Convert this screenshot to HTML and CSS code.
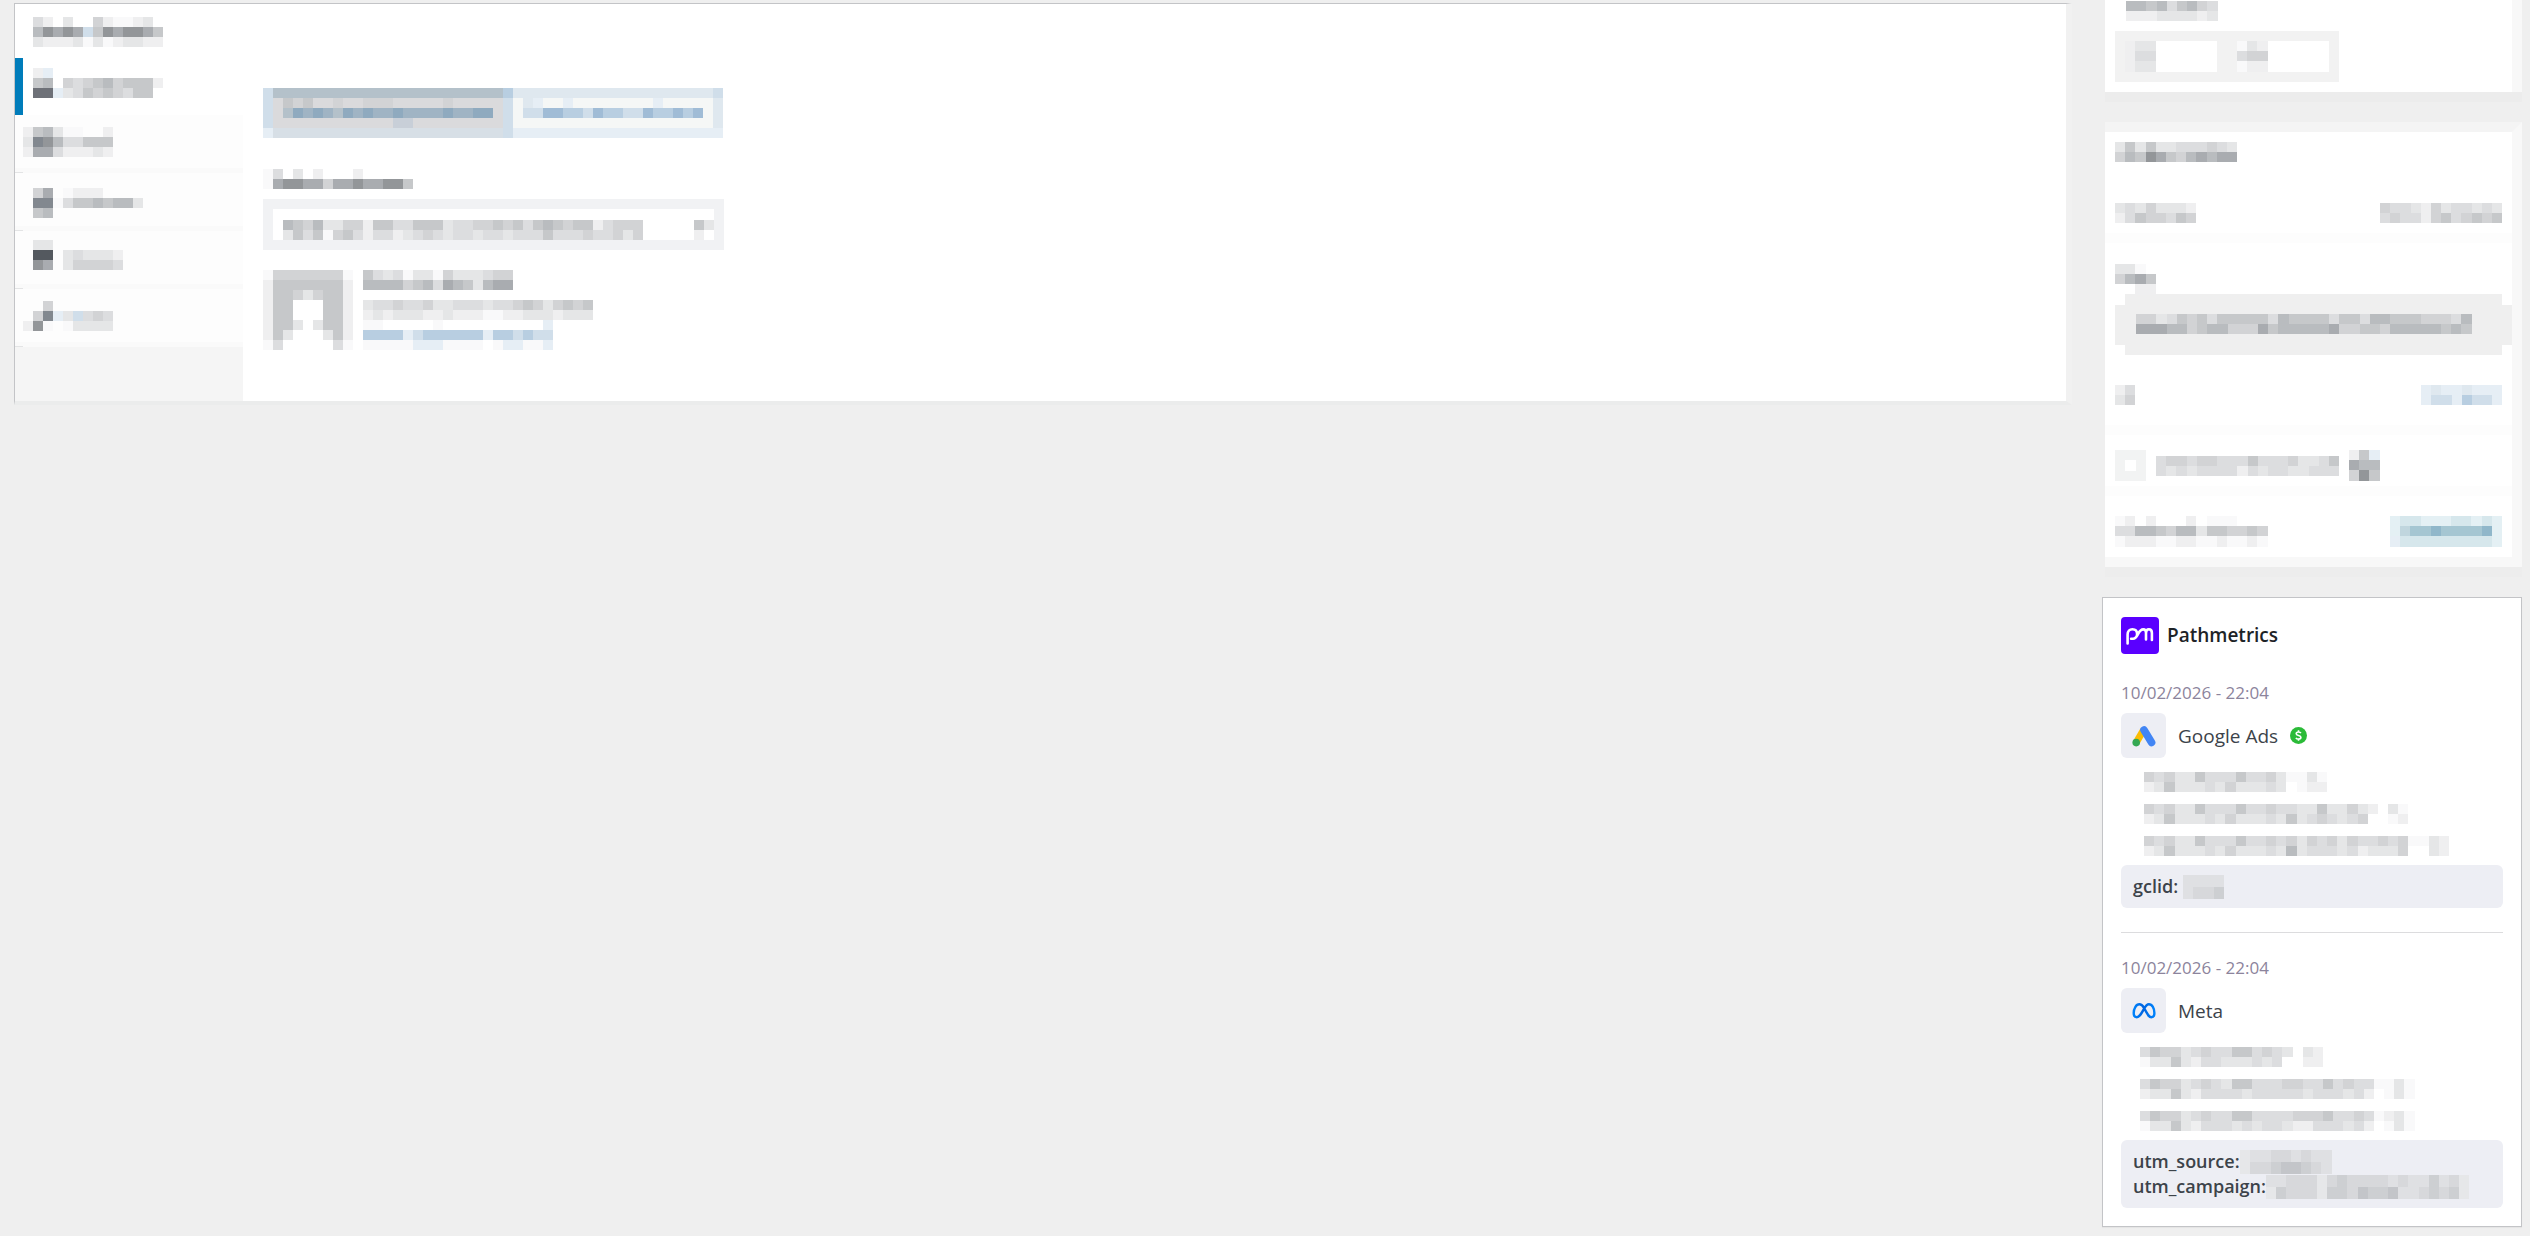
FILE: index.html
```
<!DOCTYPE html>
<html lang="en">
<head>
    <meta charset="utf-8">
    <title>Pathmetrics</title>
    <link rel="stylesheet" href="styles.css">
</head>
<body>
    <main class="order-panel">
        <h1 class="panel-title"><span class="mosaic" data-rows="42.3..521123./79898b6989986/3222313123322"></span></h1>
        <div class="panel-body">
            <nav class="tabs">
                <a href="#" class="tab active"><span class="mosaic" data-rows="2a.........../67.5456756662/jja346565466."></span></a>
                <a href="#" class="tab wide"><span class="mosaic" data-rows="267311..2/3h9744666/288422232"></span></a>
                <a href="#" class="tab"><span class="mosaic" data-rows="58.1222..../hh146676773/67........."></span></a>
                <a href="#" class="tab up"><span class="mosaic" data-rows="33......./kk.343332/98.355554"></span></a>
                <a href="#" class="tab wide"><span class="mosaic" data-rows="..5....../.5ha3b454/291.13333"></span></a>
            </nav>
            <section class="customer">
                <div class="switch">
                    <button type="button"><span class="mosaic" data-rows="btttttttttttttttttttttttc/bu656uu5uu555uuuuu5uuuuub/butefeftefeffeffffeffeeub/buuuuuuuuuuuugguuuuuuuuub/avvvvvvvvvvvvvvvvvvvvvvvb"></span></button>
                    <button type="button"><span class="mosaic" data-rows="yyyyyyyyyyyyyyyyyyyyb/wyawwawwwwwwwwawwwwwy/wbbddccbdccbbdccdcdwy/wwwwwwwwwwwwwwwwwwwwy/aaaaaaaaaaaaaaaaaaaaa"></span></button>
                </div>
                <div class="field-label"><span class="mosaic" data-rows="14.3.2...2...../189988588988996"></span></div>
                <button type="button" class="picker" aria-haspopup="listbox">
                    <span class="mosaic" data-rows="765733552664466634455656467656624555/364615642442345434434434446444544535"></span>
                    <span class="mosaic" data-rows="63/2."></span>
                </button>
                <div class="profile">
                    <span class="mosaic" data-rows="155555551/266666662/266535662/266...662/266...662/2663.3662/263...362/14.....41"></span>
                    <div class="profile-text">
                        <span class="mosaic" data-rows="643413315333455/777756748763788"></span>
                        <span class="mosaic" data-rows="34454453344434456535656/23233322322211223332333"></span>
                        <a href="#"><span class="mosaic" data-rows="11.....1..........a/ccccabccccccaccbcbb/11111aaa1111.1aa11a"></span></a>
                    </div>
                </div>
            </section>
        </div>
    </main>

    <aside class="side">
        <section class="meta-box time-box">
            <span class="mosaic" data-rows="776746754/222333323"></span>
            <div class="time-fields">
                <label class="time-field"><span class="mosaic" data-rows="233/244/233"></span><input type="text" aria-label="Hour"></label>
                <label class="time-field"><span class="mosaic" data-rows="132/455/122"></span><input type="text" aria-label="Minute"></label>
            </div>
        </section>

        <section class="meta-box review-box">
            <h2 class="review-title"><span class="mosaic" data-rows="363633444543/576986578788"></span></h2>
            <div class="review-row status-row">
                <span class="mosaic" data-rows="34353332/24655465"></span>
                <span class="mosaic" data-rows="544325344343/454425645656"></span>
            </div>
            <div class="review-row flow-row">
                <span class="mosaic" data-rows="331./5786/..22"></span>
            </div>
            <div class="flow-value"><span class="mosaic" data-rows="553465646666647666646647766655547/888775677555867777785566577777676"></span></div>
            <div class="review-row id-row">
                <span class="mosaic" data-rows="24/35"></span>
                <a href="#"><span class="mosaic" data-rows="ayaayaaa/abbacbba"></span></a>
            </div>
            <label class="review-row check-row">
                <input type="checkbox" class="check">
                <span class="mosaic" data-rows="455455444644453346/434344442434433444"></span>
                <span class="mosaic" data-rows="26a/877/596"></span>
            </label>
            <div class="review-row device-row">
                <span class="mosaic" data-rows="12.2...2.111.../447765773665565/122211221121121"></span>
                <span class="mosaic" data-rows="pqqpppqqpqp/pnrrsrrrrsp/aqqqqqqqqqp"></span>
            </div>
        </section>

        <section class="pathmetrics">
            <h2 class="brand">
                <svg class="brand-logo" viewBox="0 0 38 37" aria-hidden="true">
                    <rect width="38" height="37" rx="4" fill="#5a00ff"/>
                    <path d="M6.600 26.500V17.500c0-3.200 2-5.300 4.800-5.300 M12 21.800c5.500 0 4.500-9.400 10.300-9.400 1.900 0 2.700 1.400 2.700 3.300v6.700M25 16c0-2.500 1.100-3.800 2.900-3.800 2 0 3 1.500 3 3.800v7M11.400 12.200c2.900 0 4.700 1.900 4.700 4.700 0 2.800-1.800 4.900-4.700 4.900h-1.300" fill="none" stroke="#fff" stroke-width="2.600" stroke-linecap="round" stroke-linejoin="round"/>
                </svg>
                Pathmetrics
            </h2>

            <article class="visit">
                <time class="visit-date">10/02/2026 - 22:04</time>
                <div class="visit-source">
                    <span class="source-icon">
                        <svg width="24" height="24" viewBox="0 0 24 24" aria-hidden="true">
                            <path d="M11.400 6.200L4.200 18.600" stroke="#fbbc04" stroke-width="7"/>
                            <path d="M12 6L19.600 18.500" stroke="#4285f4" stroke-width="7.600" stroke-linecap="round"/>
                            <circle cx="4.200" cy="18.600" r="3.800" fill="#34a853"/>
                        </svg>
                    </span>
                    <span class="source-name">Google Ads</span>
                    <svg class="paid" width="17" height="17" viewBox="0 0 17 17" aria-hidden="true">
                        <circle cx="8.500" cy="8.500" r="8.500" fill="#2bbb38"/>
                        <path d="M10.900 6.200C10.400 5.300 9.500 5 8.500 5 7.200 5 6.200 5.600 6.200 6.700c0 2.400 4.700 1.200 4.700 3.600 0 1.100-1 1.800-2.400 1.800-1.200 0-2.100-.4-2.600-1.300M8.500 3.300V5M8.500 12.100v1.700" fill="none" stroke="#fff" stroke-width="1.600"/>
                    </svg>
                </div>
                <ul class="pages">
                    <li><a href="#"><span class="mosaic" data-rows="545336444644531131/23633343533343.122"></span></a></li>
                    <li><a href="#"><span class="mosaic" data-rows="54533644464454433633532.31/2363334353334363454345..12"></span></a></li>
                    <li><a href="#"><span class="mosaic" data-rows="545336444644545354535445451132/23633343533343734443423335..32"></span></a></li>
                </ul>
                <div class="params">
                    <div class="param">gclid: <span class="mosaic" data-rows="4444/4556"></span></div>
                </div>
            </article>

            <article class="visit meta-visit">
                <time class="visit-date">10/02/2026 - 22:04</time>
                <div class="visit-source">
                    <span class="source-icon">
                        <svg width="24" height="24" viewBox="0 0 24 24" aria-hidden="true">
                            <defs>
                                <linearGradient id="metaBlue">
                                    <stop offset="0" stop-color="#0082fb"/>
                                    <stop offset=".45" stop-color="#0064e0"/>
                                    <stop offset="1" stop-color="#0082fb"/>
                                </linearGradient>
                            </defs>
                            <path d="M12 8.800C10.500 6.300 9.200 5.300 7.400 5.300 4 5.300 1.700 9.700 1.700 14c0 2.500 1.100 4.200 3.100 4.200 2.300 0 3.700-2.100 7.200-8.400 1.900-3.300 3.200-4.500 4.900-4.500 3.300 0 5.500 4.200 5.500 8.700 0 2.700-1.100 4.200-3 4.200-2.200 0-3.500-1.700-7.400-9.400z" fill="none" stroke="url(#metaBlue)" stroke-width="2.400"/>
                        </svg>
                    </span>
                    <span class="source-name">Meta</span>
                </div>
                <ul class="pages">
                    <li><a href="#"><span class="mosaic" data-rows="465534544664543.32/13363244333434..22"></span></a></li>
                    <li><a href="#"><span class="mosaic" data-rows="465534543664445544645441131/23363244443444443444342.131"></span></a></li>
                    <li><a href="#"><span class="mosaic" data-rows="465534544664444555644541231/13363244434344322444342.131"></span></a></li>
                </ul>
                <div class="params">
                    <div class="param">utm_source:<span class="mosaic" data-rows="344554544/355677654"></span></div>
                    <div class="param">utm_campaign:<span class="mosaic" data-rows="44555356555545446453/36555366576674456563"></span></div>
                </div>
            </article>
        </section>
    </aside>
    <script src="mosaic.js"></script>
</body>
</html>
```
FILE: styles.css
```
* {
    box-sizing: border-box;
}

body {
    margin: 0;
    padding: 3px 8px 8px 14px;
    background-color: #efefef;
    font-family: "Segoe UI", "Open Sans", "Noto Sans", sans-serif;
    font-size: 17px;
    color: #3c434a;
    display: flex;
    align-items: flex-start;
    gap: 30px;
}

h1, h2, ul {
    margin: 0;
    padding: 0;
}

button {
    border: none;
    padding: 0;
    background: none;
    cursor: pointer;
}

.mosaic, .mosaic svg {
    display: block;
    flex: none;
}

/* Order data panel */
.order-panel {
    flex: 1;
    background-color: #fff;
    border: 1px solid #c3c4c7;
    border-right: 6px solid #f1f1f1;
    border-bottom: 4px solid #ebecec;
}

.panel-title {
    height: 54px;
    padding: 13px 18px;
}

.panel-body {
    display: flex;
}

.tabs {
    width: 228px;
    height: 343px;
    background-color: #f5f5f5;
}

.tab {
    display: block;
    height: 58px;
    padding: 15px 18px;
    background: linear-gradient(#e3e4e5, #e3e4e5) left bottom / 8px 1px no-repeat, linear-gradient(#fafafa, #fafafa) left bottom / 100% 5px no-repeat #fdfdfd;
}

.tab.active {
    padding: 10px 10px;
    background: #fff;
    border-left: 8px solid #007cba;
    height: 57px;
}

.tab.wide {
    padding: 12px 8px;
}

.tab.up {
    padding-top: 9px;
}

.customer {
    padding: 30px 20px;
}

.switch {
    display: flex;
}

.field-label {
    padding: 31px 0 10px;
}

.picker {
    display: flex;
    justify-content: space-between;
    align-items: center;
    width: 461px;
    height: 51px;
    padding: 10px 0 0 10px;
    border: 10px solid #f1f2f4;
    background-color: #fff;
}

.profile {
    display: flex;
    gap: 10px;
    padding-top: 20px;
}

.profile-text {
    display: flex;
    flex-direction: column;
    gap: 10px;
}

.profile-text a {
    margin-top: -10px;
}

/* Right column */
.side {
    width: 420px;
    flex: none;
}

.meta-box {
    background-color: #fff;
    margin-left: 3px;
    border-right: 10px solid #f8f8f8;
}

.time-box {
    margin-top: -3px;
    padding: 1px 10px 10px;
    box-shadow: 0 10px 0 #ececec;
}

.time-box > .mosaic {
    padding-left: 11px;
}

.time-fields {
    display: flex;
    padding-top: 10px;
}

.time-field {
    display: flex;
    width: 112px;
    height: 51px;
    border: 10px solid #f2f2f2;
}

.time-field input {
    flex: 1;
    min-width: 0;
    border: none;
    background: none;
}

.review-box {
    margin-top: 30px;
    border-top: 10px solid #f4f4f4;
    border-bottom: 10px solid #f8f8f8;
    box-shadow: 0 10px 0 #ededed;
}

.review-title {
    padding: 10px 10px 0;
}

.review-row {
    display: flex;
    justify-content: space-between;
    align-items: center;
    padding: 10px 10px 0;
    border-bottom: 10px solid #fdfdfd;
}

.status-row {
    height: 81px;
    padding-top: 41px;
    padding-bottom: 10px;
}

.flow-row {
    height: 51px;
    padding-top: 21px;
    border-bottom: none;
}

/* The middle strip sticks out on both sides */
.flow-value {
    margin-left: 10px;
    padding: 20px 21px 21px;
    background:
        linear-gradient(#efefef, #efefef) center / 100% 40px no-repeat,
        linear-gradient(#efefef, #efefef) center / calc(100% - 20px) 100% no-repeat;
}

.id-row {
    height: 80px;
}

.check-row {
    justify-content: flex-start;
    gap: 10px;
    height: 61px;
}

.check {
    appearance: none;
    width: 31px;
    height: 31px;
    margin: 0;
    border: 10px solid #f2f3f3;
    background-color: #fff;
}

.device-row {
    height: 61px;
    border-bottom: none;
}

/* Pathmetrics box */
.pathmetrics {
    margin-top: 30px;
    padding: 18px;
    background-color: #fff;
    border: 1px solid #c3c4c7;
    box-shadow: 0 1px 1px rgba(0, 0, 0, 0.04);
}

.brand {
    display: flex;
    align-items: center;
    gap: 8px;
    font-size: 19px;
    line-height: 38px;
    font-weight: 600;
    color: #1d2327;
}

.brand-logo {
    width: 38px;
    height: 37px;
}

.visit {
    padding: 27px 0 24px;
}

.visit-date {
    display: block;
    line-height: 24px;
    color: #8c849c;
}

.visit-source {
    display: flex;
    align-items: center;
    gap: 12px;
    padding-top: 8px;
    font-size: 19px;
}

.source-icon {
    display: flex;
    align-items: center;
    justify-content: center;
    width: 45px;
    height: 45px;
    border-radius: 6px;
    background-color: #edeef4;
}

.pages {
    list-style: none;
    padding: 14px 0 9px 23px;
    display: flex;
    flex-direction: column;
    gap: 12px;
}

.params {
    padding: 9px 12px;
    border-radius: 6px;
    background-color: #edeef4;
    font-size: 18px;
    font-weight: 600;
}

.param {
    display: flex;
    align-items: center;
    gap: 5px;
    line-height: 25px;
}

.param .mosaic {
    opacity: 0.8;
}

.meta-visit {
    border-top: 1px solid #dcdcde;
    padding-top: 23px;
    padding-bottom: 0;
}

.meta-visit .pages {
    padding-left: 19px;
}

.meta-visit .param {
    gap: 0;
}
```
FILE: mosaic.js
```
// One character per tile, rows separated by "/"
const colors = {
    1: '#f9f9fa', 2: '#efeff0', 3: '#e5e6e7', 4: '#dcdddf', 5: '#d2d3d5',
    6: '#c6c8ca', 7: '#b9bcbf', 8: '#a9acb0', 9: '#939699',
    h: '#82888f', j: '#6e7178', k: '#54595f',
    a: '#e6eef5', b: '#d0deea', c: '#b8cee1', d: '#a0bcd6', e: '#8faabf', f: '#a0b4c4', g: '#c8cfd8',
    t: '#b4c1ca', u: '#dadadc', v: '#d7dfe6', w: '#f5f7f6', y: '#dfe8ef',
    p: '#e4f0f4', q: '#d6e7ec', n: '#c0d6de', r: '#a5c6d2', s: '#90b7ca'
};
const ns = 'http://www.w3.org/2000/svg';

document.querySelectorAll('.mosaic').forEach(el => {
    // Tiles in the side column are a bit bigger, the parameter values are taller
    const tileWidth = el.closest('.side') ? 61 / 6 : 10;
    const tileHeight = el.closest('.param') ? 12 : tileWidth;
    const left = n => Math.round(n * tileWidth);
    const top = n => Math.round(n * tileHeight);

    const rows = el.dataset.rows.split('/');
    const svg = document.createElementNS(ns, 'svg');
    svg.setAttribute('width', left(rows[0].length));
    svg.setAttribute('height', top(rows.length));
    svg.setAttribute('shape-rendering', 'crispEdges');
    svg.setAttribute('aria-hidden', 'true');
    rows.forEach((row, y) => {
        [...row].forEach((key, x) => {
            if (!colors[key]) return;
            const tile = document.createElementNS(ns, 'rect');
            tile.setAttribute('x', left(x));
            tile.setAttribute('y', top(y));
            tile.setAttribute('width', left(x + 1) - left(x));
            tile.setAttribute('height', top(y + 1) - top(y));
            tile.setAttribute('fill', colors[key]);
            svg.appendChild(tile);
        });
    });
    el.appendChild(svg);
});
```
